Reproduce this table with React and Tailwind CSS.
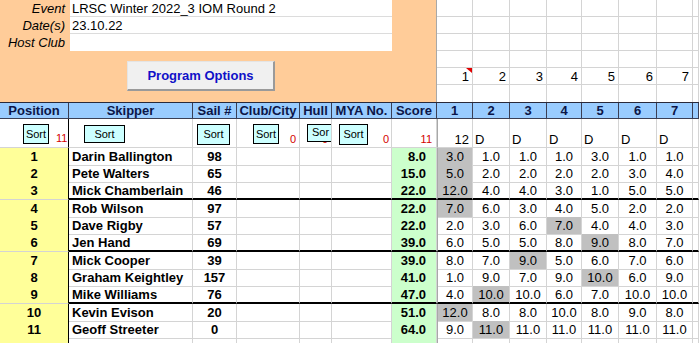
const GRID =
  'grid grid-cols-[69px_124px_44px_63px_32px_60px_45px_36px_37px_37px_35px_37px_38px_36px_1fr]';

const LINE = 'border-[#d4d4d4]';

const results = [
  [1, 'Darin Ballington', 98, '8.0', ['3.0', '1.0', '1.0', '1.0', '3.0', '1.0', '1.0'], 0],
  [2, 'Pete Walters', 65, '15.0', ['5.0', '2.0', '2.0', '2.0', '2.0', '3.0', '4.0'], 0],
  [3, 'Mick Chamberlain', 46, '22.0', ['12.0', '4.0', '4.0', '3.0', '1.0', '5.0', '5.0'], 0],
  [4, 'Rob Wilson', 97, '22.0', ['7.0', '6.0', '3.0', '4.0', '5.0', '2.0', '2.0'], 0],
  [5, 'Dave Rigby', 57, '22.0', ['2.0', '3.0', '6.0', '7.0', '4.0', '4.0', '3.0'], 3],
  [6, 'Jen Hand', 69, '39.0', ['6.0', '5.0', '5.0', '8.0', '9.0', '8.0', '7.0'], 4],
  [7, 'Mick Cooper', 39, '39.0', ['8.0', '7.0', '9.0', '5.0', '6.0', '7.0', '6.0'], 2],
  [8, 'Graham Keightley', 157, '41.0', ['1.0', '9.0', '7.0', '9.0', '10.0', '6.0', '9.0'], 4],
  [9, 'Mike Williams', 76, '47.0', ['4.0', '10.0', '10.0', '6.0', '7.0', '10.0', '10.0'], 1],
  [10, 'Kevin Evison', 20, '51.0', ['12.0', '8.0', '8.0', '10.0', '8.0', '9.0', '8.0'], 0],
  [11, 'Geoff Streeter', 0, '64.0', ['9.0', '11.0', '11.0', '11.0', '11.0', '11.0', '11.0'], 1],
];

function SortBtn({ label = 'Sort', className = '' }) {
  return (
    <div
      className={`bg-[#ccffff] border border-black text-[11px] leading-none flex items-center justify-center overflow-hidden ${className}`}
    >
      {label}
    </div>
  );
}

// ── Top band: event details + race number strip ───────────────
function TopBand() {
  const labels = ['Event', 'Date(s)', 'Host Club'];
  const values = ['LRSC Winter 2022_3 IOM Round 2', '23.10.22', ''];
  return (
    <div className="flex h-[102px]">
      <div className="w-[437px] shrink-0 bg-[#ffcc99] border-r border-[#a8a8a8] flex flex-col">
        <div className="flex">
          <div className="w-[70px] flex flex-col">
            {labels.map((l) => (
              <div key={l} className="h-[17px] text-right pr-[5px] italic text-[13px] leading-[18px]">
                {l}
              </div>
            ))}
          </div>
          <div className="w-[322px] bg-white flex flex-col">
            {values.map((v, i) => (
              <div
                key={i}
                className={`h-[17px] pl-[2px] text-[13px] leading-[18px] ${i < 2 ? 'border-b border-[#dcdcdc]' : ''}`}
              >
                {v}
              </div>
            ))}
          </div>
        </div>
        <div className="mt-[10px] ml-[127px] w-[148px] h-[30px] bg-[#f0f0f0] border border-t-[#e4e4e4] border-l-[#e4e4e4] border-r-2 border-b-2 border-r-[#9a9a9a] border-b-[#9a9a9a] flex items-center justify-center text-[13px] font-bold text-[#1010c8]">
          Program Options
        </div>
      </div>
      <div className="flex-1 grid grid-cols-[36px_37px_37px_35px_37px_38px_36px_1fr] grid-rows-[repeat(6,17px)]">
        {Array.from({ length: 48 }).map((_, k) => {
          const row = Math.floor(k / 8);
          const col = k % 8;
          return (
            <div
              key={k}
              className={`relative border-r ${row < 5 ? 'border-b' : ''} ${LINE} text-right pr-[3px] text-[13px] leading-[18px]`}
            >
              {row === 4 && col < 7 ? col + 1 : ''}
              {row === 4 && col === 0 && (
                <svg className="absolute right-0 top-0" width="6" height="5" viewBox="0 0 6 5">
                  <polygon points="0,0 6,0 6,5" fill="#e00000" />
                </svg>
              )}
            </div>
          );
        })}
      </div>
    </div>
  );
}

function HeaderRow() {
  const heads = ['Position', 'Skipper', 'Sail #', 'Club/City', 'Hull', 'MYA No.', 'Score', '1', '2', '3', '4', '5', '6', '7', ''];
  return (
    <div className={`${GRID} h-[17px] bg-[#99ccff] border-t border-[#2a2a3a]`}>
      {heads.map((h, i) => (
        <div
          key={i}
          className="border-r border-b border-[#3a3f55] text-center font-bold text-[13px] leading-[16px] text-[#0c1648] whitespace-nowrap overflow-hidden"
        >
          {h}
        </div>
      ))}
    </div>
  );
}

function SortRow() {
  const red = 'absolute text-[11px] leading-none text-[#d40000]';
  const cell = `relative h-full border-r border-b ${LINE}`;
  return (
    <div className={`${GRID} h-[29px]`}>
      <div className={`${cell} border-r-black`}>
        <SortBtn className="absolute left-[23px] top-[5px] w-[26px] h-[20px]" />
        <span className={`${red} left-[56px] bottom-[3px]`}>11</span>
      </div>
      <div className={cell}>
        <SortBtn className="absolute left-[15px] top-[6px] w-[41px] h-[18px]" />
      </div>
      <div className={cell}>
        <SortBtn className="absolute left-[4px] top-[5px] w-[33px] h-[21px]" />
      </div>
      <div className={cell}>
        <SortBtn className="absolute left-[16px] top-[5px] w-[26px] h-[20px]" />
        <span className={`${red} right-[3px] bottom-[2px]`}>0</span>
      </div>
      <div className={`${cell} overflow-hidden`}>
        <span className={`${red} right-[3px] bottom-[2px]`}>0</span>
        <div className="absolute left-[7px] top-[5px] w-[26px] h-[18px] bg-[#ccffff] border border-black text-[11px] leading-none pl-[4px] pt-[2px]">
          Sor
        </div>
      </div>
      <div className={cell}>
        <SortBtn className="absolute left-[7px] top-[5px] w-[29px] h-[21px]" />
        <span className={`${red} right-[2px] bottom-[2px]`}>0</span>
      </div>
      <div className={cell}>
        <span className={`${red} right-[4px] bottom-[2px]`}>11</span>
      </div>
      <div className={`${cell} border-l border-l-[#a8a8a8] text-right pr-[3px] text-[13px] leading-none flex items-end justify-end pb-[1px]`}>
        12
      </div>
      {[0, 1, 2, 3, 4, 5].map((k) => (
        <div key={k} className={`${cell} text-[13px] leading-none flex items-end pl-[2px] pb-[1px]`}>
          D
        </div>
      ))}
      <div className={cell} />
    </div>
  );
}

function DataRow({ r, thick }) {
  const [pos, name, sail, score, races, drop] = r;
  const bb = thick ? 'border-b-2 border-b-black' : 'border-b';
  const base = `border-r ${LINE} ${bb} text-[13px] leading-[17px] whitespace-nowrap overflow-hidden`;
  return (
    <div className={`${GRID} ${thick ? 'h-[18px]' : 'h-[17px]'}`}>
      <div className={`border-r border-r-black border-b ${LINE} bg-[#ffff99] text-center font-bold text-[13px] leading-[17px]`}>
        {pos}
      </div>
      <div className={`${base} font-bold pl-[3px]`}>{name}</div>
      <div className={`${base} font-bold text-center`}>{sail}</div>
      <div className={base} />
      <div className={base} />
      <div className={base} />
      <div className={`${base} bg-[#ccffcc] font-bold text-right pr-[10px]`}>{score}</div>
      {races.map((v, i) => (
        <div
          key={i}
          className={`${base} text-center ${i === 0 ? 'border-l border-l-[#a8a8a8]' : ''} ${i === drop ? 'bg-[#c0c0c0]' : ''}`}
        >
          {v}
        </div>
      ))}
      <div className={base} />
    </div>
  );
}

function EmptyRow() {
  const base = `border-r ${LINE} h-full`;
  return (
    <div className={`${GRID} h-[17px]`}>
      <div className={`border-r border-r-black bg-[#ffff99]`} />
      <div className={base} />
      <div className={base} />
      <div className={base} />
      <div className={base} />
      <div className={base} />
      <div className={`${base} bg-[#ccffcc]`} />
      <div className={`${base} border-l border-l-[#a8a8a8]`} />
      {[0, 1, 2, 3, 4, 5, 6].map((k) => (
        <div key={k} className={base} />
      ))}
    </div>
  );
}

export default function App() {
  return (
    <div className="w-[699px] h-[343px] overflow-hidden bg-white text-black font-['Liberation_Sans',Arial,sans-serif]">
      <TopBand />
      <HeaderRow />
      <SortRow />
      {results.map((r, i) => (
        <DataRow key={r[0]} r={r} thick={i === 2 || i === 5 || i === 8} />
      ))}
      <EmptyRow />
    </div>
  );
}
